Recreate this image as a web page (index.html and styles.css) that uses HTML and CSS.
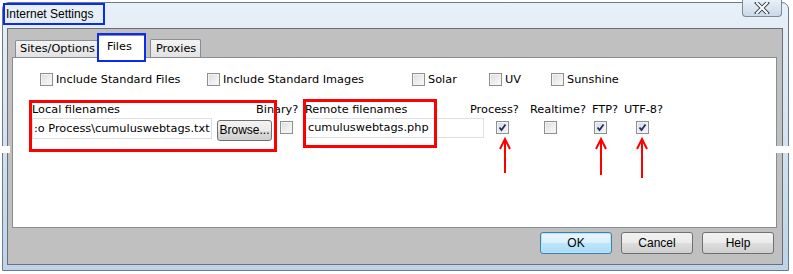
FILE: index.html
```html
<!DOCTYPE html>
<html lang="en">
<head>
    <meta charset="UTF-8">
    <title>Internet Settings</title>
    <link rel="stylesheet" href="styles.css">
</head>
<body>

<div class="window">
    <!-- Title bar -->
    <div class="titlebar">
        <span class="title">Internet Settings</span>
        <div class="close-btn">
            <svg width="20" height="12" viewBox="0 0 20 12">
                <path d="M5 1 L15 11 M15 1 L5 11" stroke="#3a4556" stroke-width="4" stroke-linecap="square"/>
                <path d="M5 1 L15 11 M15 1 L5 11" stroke="#fff" stroke-width="2" stroke-linecap="square"/>
            </svg>
        </div>
    </div>

    <!-- Client area -->
    <div class="client">
        <div class="tabs">
            <div class="tab tab-sites">Sites/Options</div>
            <div class="tab tab-files active">Files</div>
            <div class="tab tab-proxies">Proxies</div>
        </div>

        <div class="panel">
            <div class="std-row">
                <label class="check-label"><span class="cb"></span>Include Standard Files</label>
                <label class="check-label"><span class="cb"></span>Include Standard Images</label>
                <label class="check-label"><span class="cb"></span>Solar</label>
                <label class="check-label"><span class="cb"></span>UV</label>
                <label class="check-label"><span class="cb"></span>Sunshine</label>
            </div>

            <div class="head-row">
                <span>Local filenames</span>
                <span>Binary?</span>
                <span>Remote filenames</span>
                <span>Process?</span>
                <span>Realtime?</span>
                <span>FTP?</span>
                <span>UTF-8?</span>
            </div>

            <div class="file-row">
                <div class="field field-local">:o Process\cumuluswebtags.txt</div>
                <div class="browse-btn">Browse...</div>
                <span class="cb cb-binary"></span>
                <div class="field field-remote">cumuluswebtags.php</div>
                <span class="cb checked cb-process"><svg width="11" height="11" viewBox="0 0 11 11"><path d="M2.5 5.5 L4.5 8 L8.5 2.5" stroke="#222f5c" stroke-width="1.8" fill="none"/></svg></span>
                <span class="cb cb-realtime"></span>
                <span class="cb checked cb-ftp"><svg width="11" height="11" viewBox="0 0 11 11"><path d="M2.5 5.5 L4.5 8 L8.5 2.5" stroke="#222f5c" stroke-width="1.8" fill="none"/></svg></span>
                <span class="cb checked cb-utf"><svg width="11" height="11" viewBox="0 0 11 11"><path d="M2.5 5.5 L4.5 8 L8.5 2.5" stroke="#222f5c" stroke-width="1.8" fill="none"/></svg></span>
            </div>

            <!-- annotations -->
            <div class="mark mark-local"></div>
            <div class="mark mark-remote"></div>
            <svg class="arrows" width="762" height="169" viewBox="0 0 762 169">
                <g stroke="#ff0000" stroke-width="2" fill="none">
                    <path d="M492 81 V115 M487 91 L492 81 L497 91"/>
                    <path d="M588 81 V117 M583 91 L588 81 L593 91"/>
                    <path d="M629 81 V120 M624 91 L629 81 L634 91"/>
                </g>
            </svg>
        </div>

        <div class="buttons">
            <div class="btn default">OK</div>
            <div class="btn">Cancel</div>
            <div class="btn">Help</div>
        </div>
    </div>
</div>

<div class="glitch glitch-left"></div>
<div class="glitch glitch-right"></div>

</body>
</html>
```

FILE: styles.css
```css
body {
    margin: 0;
    width: 793px;
    height: 274px;
    overflow: hidden;
    background: #fff;
    font-family: 'DejaVu Sans', Verdana, sans-serif;
    font-size: 11.3px;
    color: #000;
    position: relative;
}

/* Window frame */
.window {
    margin: 2px 0 0 2px;
    width: 787px;
    height: 269px;
    box-sizing: border-box;
    border: 1px solid #6c7b8b;
    border-radius: 7px 7px 0 0;
    background: linear-gradient(180deg, #e8f0f8 0%, #d8e6f3 40%, #bcd3ea 100%);
    padding: 0 5px 5px 4px;
}

.titlebar {
    display: flex;
    height: 25px;
}

.title {
    font-family: 'Liberation Sans', Arial, sans-serif;
    font-size: 12px;
    line-height: 18px;
    width: 97px;
    padding-left: 1px;
    margin-left: -4px;
    height: 18px;
    border: 2px solid #0b2cf0;
}

.close-btn {
    margin-left: auto;
    margin-top: -3px;
    margin-right: 1px;
    width: 40px;
    height: 17px;
    box-sizing: border-box;
    border: 1px solid #7b8898;
    border-top: none;
    border-radius: 0 0 4px 4px;
    background: linear-gradient(180deg, #e9f0f7, #c9d8e8);
    display: flex;
    align-items: center;
    justify-content: center;
}

/* Client */
.client {
    height: 237px;
    box-sizing: border-box;
    border: 1px solid #6f6f6f;
    background: #c0c0c0;
    display: flex;
    flex-direction: column;
}

.tabs {
    display: flex;
    align-items: flex-end;
    padding: 6px 0 0 7px;
    height: 22px;
    position: relative;
    z-index: 1;
}

.tab {
    box-sizing: border-box;
    border: 1px solid #898c95;
    border-bottom: none;
    border-radius: 2px 2px 0 0;
    background: linear-gradient(180deg, #f3f3f3, #e2e2e2);
    line-height: 15px;
}

.tab-sites {
    width: 84px;
    height: 17px;
    padding-left: 4px;
}

.tab-files {
    width: 48px;
    height: 23px;
    margin-left: -1px;
    margin-bottom: -1px;
    padding: 3px 0 0 8px;
    background: #fff;
    position: relative;
}

.tab-files::after {
    content: "";
    position: absolute;
    top: -3px;
    left: -2px;
    right: -1px;
    bottom: -4px;
    border: 2px solid #0b2cf0;
}

.tab-proxies {
    width: 51px;
    height: 18px;
    margin-left: 4px;
    padding: 1px 0 0 5px;
}

/* Panel */
.panel {
    position: relative;
    margin: 0 5px 0 4px;
    height: 171px;
    box-sizing: border-box;
    border: 1px solid #898c95;
    background: #fff;
}

.std-row {
    display: grid;
    grid-template-columns: 167px 205px 77px 62px auto;
    padding-left: 27px;
    margin-top: 14px;
}

.check-label {
    display: flex;
    align-items: center;
    height: 13px;
    line-height: 13px;
    padding-top: 1px;
}

.check-label .cb {
    margin: -1px 3px 0 0;
}

.cb {
    display: inline-flex;
    align-items: center;
    justify-content: center;
    flex: none;
    width: 13px;
    height: 13px;
    box-sizing: border-box;
    border: 1px solid #8e8f8f;
    background: linear-gradient(135deg, #dcdcdc, #fbfbfb);
    box-shadow: inset 0 0 0 1px #f4f4f4;
}

.cb.checked {
    background: linear-gradient(135deg, #d6dbe6, #f4f6fa);
}

.head-row {
    display: grid;
    grid-template-columns: 224px 49px 165px 60px 62px 32px auto;
    padding-left: 19px;
    margin-top: 17px;
    height: 14px;
    line-height: 14px;
}

.file-row {
    display: flex;
    align-items: flex-start;
    padding-left: 19px;
    margin-top: 1px;
}

.field {
    box-sizing: border-box;
    border: 1px solid #dcdfe3;
    background: #fff;
    white-space: nowrap;
    overflow: hidden;
    padding-left: 1px;
}

.field-local {
    width: 180px;
    height: 21px;
    line-height: 19px;
}

.field-remote {
    width: 179px;
    height: 20px;
    line-height: 18px;
    margin-left: 12px;
    padding-left: 2px;
}

.browse-btn {
    margin: 2px 0 0 5px;
    width: 55px;
    height: 21px;
    box-sizing: border-box;
    border: 1px solid #707070;
    border-radius: 3px;
    background: linear-gradient(180deg, #f2f2f2 0%, #ebebeb 50%, #dddddd 51%, #cfcfcf 100%);
    font-family: 'Liberation Sans', Arial, sans-serif;
    font-size: 12px;
    line-height: 19px;
    text-align: center;
    white-space: nowrap;
    overflow: hidden;
}

.cb-binary { margin: 3px 0 0 8px; }
.cb-process { margin: 3px 0 0 12px; }
.cb-realtime { margin: 3px 0 0 35px; }
.cb-ftp { margin: 3px 0 0 37px; }
.cb-utf { margin: 3px 0 0 29px; }

/* Red annotation boxes */
.mark {
    position: absolute;
    box-sizing: border-box;
    border: 3px solid #ff0000;
}

.mark-local {
    left: 16px;
    top: 42px;
    width: 248px;
    height: 52px;
}

.mark-remote {
    left: 290px;
    top: 41px;
    width: 134px;
    height: 49px;
}

.arrows {
    position: absolute;
    left: 0;
    top: 0;
}

/* Bottom buttons */
.buttons {
    display: flex;
    justify-content: flex-end;
    gap: 9px;
    padding-right: 8px;
    margin-top: 4px;
}

.btn {
    width: 72px;
    height: 22px;
    box-sizing: border-box;
    border: 1px solid #707070;
    border-radius: 3px;
    background: linear-gradient(180deg, #f2f2f2 0%, #ebebeb 50%, #dddddd 51%, #cfcfcf 100%);
    font-family: 'Liberation Sans', Arial, sans-serif;
    font-size: 12px;
    line-height: 20px;
    text-align: center;
}

.btn.default {
    border-color: #3c7fb1;
    background: linear-gradient(180deg, #eaf6fd 0%, #d9f0fc 50%, #bee6fd 51%, #a7d9f5 100%);
    box-shadow: inset 0 0 0 1px #bfe3f7;
}

/* screen capture artefacts */
.glitch {
    position: absolute;
    top: 146px;
    height: 7px;
    background: #fff;
}

.glitch-left {
    left: 0;
    width: 10px;
}

.glitch-right {
    left: 773px;
    width: 20px;
}
```
